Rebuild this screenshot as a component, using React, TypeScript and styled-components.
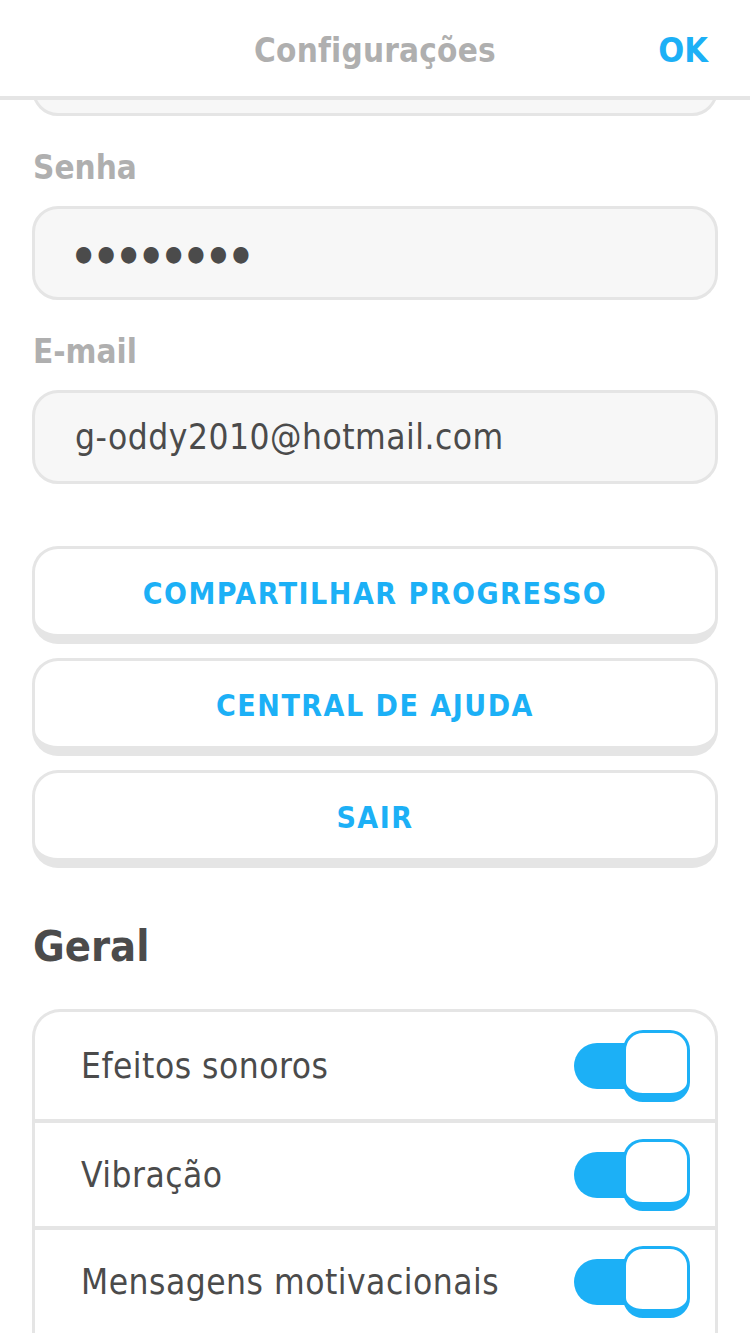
import React from "react";
import styled, { createGlobalStyle } from "styled-components";

const FONT = `"Liberation Sans Narrow", "DejaVu Sans Condensed", "Noto Sans", sans-serif`;

const GlobalStyle = createGlobalStyle`
  html, body { margin: 0; padding: 0; background: #ffffff; }
  body { font-family: ${FONT}; overflow: hidden; }
  * { box-sizing: border-box; }
`;

const Screen = styled.div`
  width: 750px;
  height: 1334px;
  display: flex;
  flex-direction: column;
  overflow: hidden;
  background: #fff;
`;

const Header = styled.header`
  height: 100px;
  flex: none;
  border-bottom: 4px solid #e5e5e5;
  display: grid;
  grid-template-columns: 1fr auto 1fr;
  align-items: center;
  padding: 4px 42px 0 42px;
`;

const Title = styled.h1`
  grid-column: 2;
  margin: 0;
  font-family: ${FONT};
  font-weight: 700;
  font-size: 33px;
  color: #afafaf;
  letter-spacing: 0.2px;
`;

const Done = styled.button`
  grid-column: 3;
  justify-self: end;
  border: none;
  background: none;
  padding: 0;
  font-family: ${FONT};
  font-weight: 700;
  font-size: 34px;
  color: #1cb0f6;
`;

const Content = styled.main`
  flex: 1;
  overflow: hidden;
  padding: 0 32px;
  display: flex;
  flex-direction: column;
  & > * {
    flex: none;
  }
`;

const ScrolledOff = styled.div`
  height: 16px;
  overflow: hidden;
  display: flex;
  flex-direction: column;
  justify-content: flex-end;
`;

const Label = styled.label`
  font-family: ${FONT};
  font-weight: 700;
  font-size: 33px;
  color: #afafaf;
  line-height: 40px;
  margin: 32px 0 18px 1px;
`;

const Field = styled.div<{ $secret?: boolean }>`
  flex: none;
  height: 94px;
  border: 3px solid #e5e5e5;
  border-radius: 26px;
  background: #f7f7f7;
  display: flex;
  align-items: center;
  padding: 0 40px;
  font-family: ${FONT};
  font-size: ${(p) => (p.$secret ? "22px" : "35px")};
  letter-spacing: ${(p) => (p.$secret ? "5.2px" : "0.5px")};
  color: #4b4b4b;
`;

const Buttons = styled.div`
  display: flex;
  flex-direction: column;
  gap: 14px;
  margin-top: 62px;
`;

const ActionButton = styled.button`
  height: 98px;
  border: 3px solid #e5e5e5;
  border-bottom-width: 10px;
  border-radius: 26px;
  background: #fff;
  font-family: ${FONT};
  font-weight: 700;
  font-size: 30px;
  letter-spacing: 1.5px;
  color: #1cb0f6;
  text-transform: uppercase;
  padding: 4px 0 0;
`;

const SectionTitle = styled.h2`
  margin: 50px 0 0 1px;
  font-family: ${FONT};
  font-weight: 700;
  font-size: 43px;
  line-height: 56px;
  color: #4b4b4b;
`;

const Card = styled.div`
  margin-top: 35px;
  border: 3px solid #e5e5e5;
  border-bottom: none;
  border-radius: 28px 28px 0 0;
  display: flex;
  flex-direction: column;
`;

const Row = styled.div`
  height: 107px;
  flex: none;
  display: flex;
  align-items: center;
  justify-content: space-between;
  padding: 0 25px 0 46px;
  & + & {
    border-top: 4px solid #e5e5e5;
  }
`;

const RowText = styled.span`
  font-family: ${FONT};
  font-size: 35px;
  letter-spacing: 0.5px;
  color: #4b4b4b;
`;

const Toggle = styled.div`
  display: flex;
  align-items: center;
  width: 116px;
  height: 72px;
`;

const Track = styled.div`
  width: 60px;
  height: 46px;
  margin-right: -11px;
  background: #1cb0f6;
  border-radius: 23px 0 0 23px;
`;

const Knob = styled.div`
  width: 67px;
  height: 72px;
  border: 3px solid #1cb0f6;
  border-bottom-width: 9px;
  border-radius: 20px;
  background: #fff;
  position: relative;
`;

const settings = ["Efeitos sonoros", "Vibração", "Mensagens motivacionais"];

export default function App() {
  return (
    <>
      <GlobalStyle />
      <Screen>
        <Header>
          <Title>Configurações</Title>
          <Done>OK</Done>
        </Header>
        <Content>
          <ScrolledOff>
            <Field />
          </ScrolledOff>
          <Label>Senha</Label>
          <Field $secret>●●●●●●●●</Field>
          <Label>E-mail</Label>
          <Field>g-oddy2010@hotmail.com</Field>
          <Buttons>
            <ActionButton>Compartilhar progresso</ActionButton>
            <ActionButton>Central de ajuda</ActionButton>
            <ActionButton>Sair</ActionButton>
          </Buttons>
          <SectionTitle>Geral</SectionTitle>
          <Card>
            {settings.map((s) => (
              <Row key={s}>
                <RowText>{s}</RowText>
                <Toggle>
                  <Track />
                  <Knob />
                </Toggle>
              </Row>
            ))}
          </Card>
        </Content>
      </Screen>
    </>
  );
}
